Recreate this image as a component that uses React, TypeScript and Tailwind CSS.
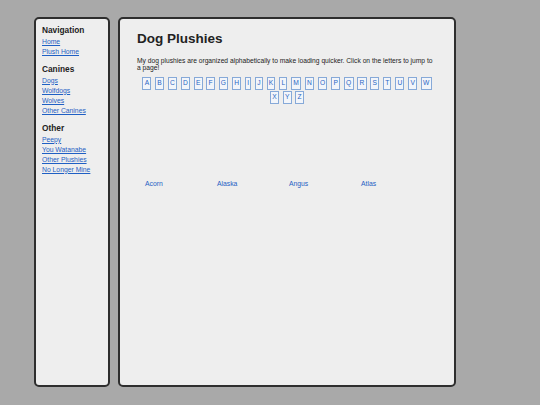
import React from "react";

const navGroups = [
  { title: "Navigation", links: ["Home", "Plush Home"] },
  { title: "Canines", links: ["Dogs", "Wolfdogs", "Wolves", "Other Canines"] },
  { title: "Other", links: ["Peepy", "You Watanabe", "Other Plushies", "No Longer Mine"] },
];

const letters = "ABCDEFGHIJKLMNOPQRSTUVWXYZ".split("");
const plushies = ["Acorn", "Alaska", "Angus", "Atlas"];

const Sidebar = () => {
  return (
    <div className="w-[76px] shrink-0 rounded-[5px] border-2 border-[#2e2e2e] bg-[#eeeeee] px-[6px] pt-[6px]">
      {navGroups.map((group, i) => (
        <div key={group.title} className={i > 0 ? "mt-[7.5px]" : ""}>
          <p className="h-[10px] text-[8.3px] font-bold leading-[10px] text-[#222]">{group.title}</p>
          <ul className="mt-[1.5px]">
            {group.links.map((link) => (
              <li key={link} className="h-[10px] text-[6.8px] leading-[10px]">
                <a href="#" className="text-[#1f5fc4] underline">
                  {link}
                </a>
              </li>
            ))}
          </ul>
        </div>
      ))}
    </div>
  );
};

const App = () => {
  return (
    <div className="flex h-[405px] w-[540px] gap-[8px] bg-[#a9a9a9] pl-[34px] pt-[17px] pb-[18px] font-['Liberation_Sans',Arial,sans-serif]">
      <Sidebar />
      <div className="w-[338px] shrink-0 rounded-[5px] border-2 border-[#2e2e2e] bg-[#eeeeee] px-[17px] pt-[12px]">
        <h1 className="text-[13.5px] font-bold leading-[16px] text-[#222]">Dog Plushies</h1>
        <p className="mt-[10px] w-[300px] text-[6.7px] leading-[7px] text-[#222]">
          My dog plushies are organized alphabetically to make loading quicker. Click on the letters to jump to a page!
        </p>
        <div className="mt-[6px] flex flex-wrap justify-center gap-x-[3.8px] gap-y-[1px]">
          {letters.map((l) => (
            <a
              key={l}
              href="#"
              className="flex h-[13px] items-center border border-[#86a9d8] bg-[#f2f5fa] px-[1.2px] text-[6.7px] text-[#2a66c4]"
            >
              {l}
            </a>
          ))}
        </div>
        <div className="mt-[75px] flex">
          {plushies.map((p) => (
            <div key={p} className="w-[72px] pl-[8px] text-[6.8px] leading-[10px]">
              <a href="#" className="text-[#1f5fc4]">
                {p}
              </a>
            </div>
          ))}
        </div>
      </div>
    </div>
  );
};

export default App;
